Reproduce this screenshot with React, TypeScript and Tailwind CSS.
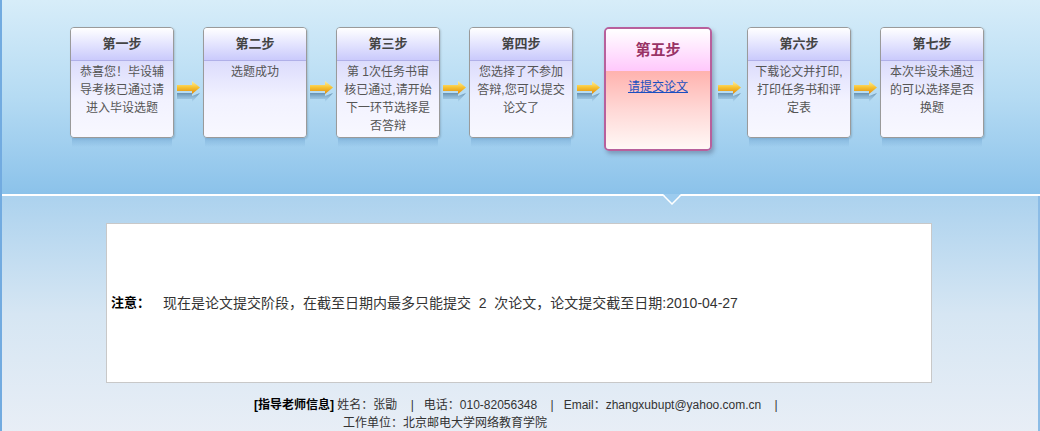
const font = "font-['Liberation_Sans','Noto_Sans_CJK_SC',sans-serif]";

type Step = { title: string; lines: string[] };

const steps: Step[] = [
  { title: "第一步", lines: ["恭喜您！毕设辅", "导考核已通过请", "进入毕设选题"] },
  { title: "第二步", lines: ["选题成功"] },
  { title: "第三步", lines: ["第 1次任务书审", "核已通过,请开始", "下一环节选择是", "否答辩"] },
  { title: "第四步", lines: ["您选择了不参加", "答辩,您可以提交", "论文了"] },
  { title: "第五步", lines: [] },
  { title: "第六步", lines: ["下载论文并打印,", "打印任务书和评", "定表"] },
  { title: "第七步", lines: ["本次毕设未通过", "的可以选择是否", "换题"] },
];

function Arrow({ width }: { width: string }) {
  return (
    <div className={`${width} flex shrink-0 justify-center pt-[54px]`}>
      <svg width="25" height="23" viewBox="0 0 25 23">
        <defs>
          <linearGradient id="ag" x1="0" y1="0" x2="0" y2="1">
            <stop offset="0" stopColor="#fff2a0" />
            <stop offset="0.5" stopColor="#f6c232" />
            <stop offset="1" stopColor="#e08a10" />
          </linearGradient>
          <linearGradient id="sg" x1="0" y1="0" x2="0" y2="1">
            <stop offset="0" stopColor="#5e88a8" stopOpacity="0.9" />
            <stop offset="1" stopColor="#8fbde0" stopOpacity="0.2" />
          </linearGradient>
        </defs>
        <polygon points="1,12 16,12 16,15 24,12 16,21 16,18 1,18" fill="url(#sg)" />
        <polygon points="1,4 16,4 16,0 24,6.5 16,13 16,10 1,10" fill="url(#ag)" />
      </svg>
    </div>
  );
}

function StepCard({ step }: { step: Step }) {
  return (
    <div className="flex w-[104px] shrink-0 flex-col">
      <div className="flex h-[111px] flex-col overflow-hidden rounded-[4px] border border-[#9a9a9a] shadow-[1px_1px_2px_rgba(0,0,0,0.15)]">
        <div className="flex h-[33px] shrink-0 items-center justify-center border-b border-[#b0b0e8] bg-gradient-to-b from-white to-[#cacafc] text-[13px] font-bold text-[#444]">
          {step.title}
        </div>
        <div className="flex-1 bg-gradient-to-b from-[#dcdcfc] via-[#f2f2ff] to-[#f8f8ff] pt-[2px] text-center text-[12px] leading-[18px] text-[#555]">
          {step.lines.map((l) => (
            <div key={l}>{l}</div>
          ))}
        </div>
      </div>
      <div className="mx-[2px] h-[9px] bg-gradient-to-b from-[#7aaed8]/70 to-transparent" />
    </div>
  );
}

function ActiveCard({ step }: { step: Step }) {
  return (
    <div className="flex w-[108px] shrink-0 flex-col">
      <div className="flex h-[124px] flex-col overflow-hidden rounded-[5px] border-2 border-[#b8609c] shadow-[2px_3px_4px_rgba(60,60,90,0.35)]">
        <div className="flex h-[42px] shrink-0 items-center justify-center bg-gradient-to-b from-white to-[#ffc8fc] text-[15px] font-bold text-[#993366]">
          {step.title}
        </div>
        <div className="flex-1 bg-gradient-to-b from-[#ffb2ae] via-[#ffd8d6] to-[#fff8f6] pt-[7px] text-center text-[12px] text-[#1a4fc0]">
          <a href="#" className="underline">
            请提交论文
          </a>
        </div>
      </div>
    </div>
  );
}

export default function App() {
  return (
    <div className={`${font} relative flex h-[431px] w-[1040px] flex-col overflow-hidden border-l-2 border-[#72abe0]`}>
      <div className="h-[194px] shrink-0 bg-gradient-to-b from-[#d7edf9] via-[#b5dbf3] to-[#8bc2ea] pl-[68px] pt-[27px]">
        <div className="flex">
          {steps.map((s, i) => (
            <div key={s.title} className="flex">
              {i === 4 ? <ActiveCard step={s} /> : <StepCard step={s} />}
              {i < steps.length - 1 && (
                <Arrow width={i === 3 ? "w-[31px]" : i === 4 ? "w-[35px]" : "w-[29px]"} />
              )}
            </div>
          ))}
        </div>
      </div>
      <div className="relative h-[2px] shrink-0 bg-white">
        <svg
          className="absolute left-[661px] top-0"
          width="18"
          height="11"
          viewBox="0 0 18 11"
        >
          <polygon points="0,0 18,0 9,9" fill="#9ccbee" />
          <polyline points="0,1 9,10 18,1" fill="none" stroke="white" strokeWidth="1.5" />
        </svg>
      </div>
      <div className="flex flex-1 flex-col border-r-2 border-[#8cbce6] bg-gradient-to-b from-[#acd2ee] via-[#d6e6f3] to-[#e8eef6]">
        <div className="ml-[104px] mt-[27px] flex h-[160px] w-[826px] items-center border border-[#c8c8c8] bg-white pl-[4px] text-[#333]">
          <span className="text-[13px] font-bold text-black">注意：</span>
          <span className="ml-[13px] whitespace-pre text-[14px]">
            现在是论文提交阶段，在截至日期内最多只能提交  2  次论文，论文提交截至日期:2010-04-27
          </span>
        </div>
        <div className="ml-[252px] mt-[13px] text-[12px] leading-[18px] text-[#333]">
          <div className="whitespace-pre">
            <span className="font-bold text-black">[指导老师信息]</span>
            {" 姓名：张勖    |   电话：010-82056348    |   Email：zhangxubupt@yahoo.com.cn    |"}
          </div>
          <div className="ml-[89px]">工作单位：北京邮电大学网络教育学院</div>
        </div>
      </div>
      <div className="h-[2px] shrink-0 bg-[#5b95cc]" />
    </div>
  );
}
